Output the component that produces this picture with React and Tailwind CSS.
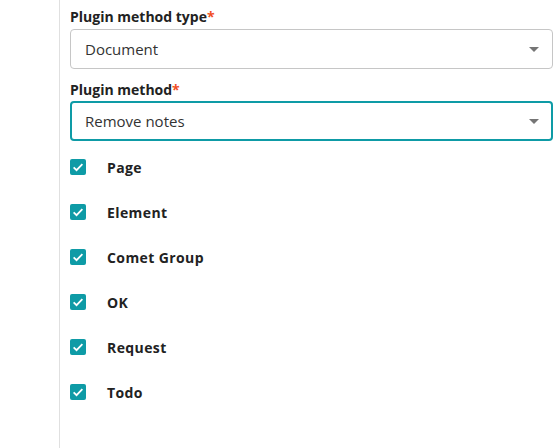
import React from "react";

const items = ["Page", "Element", "Comet Group", "OK", "Request", "Todo"];

function Arrow() {
  return (
    <svg width="10" height="5" viewBox="0 0 10 5" className="shrink-0">
      <path d="M0 0 L10 0 L5 5 Z" fill="#757575" />
    </svg>
  );
}

function Check() {
  return (
    <div className="w-4 h-4 rounded-[2px] bg-[#0e9ba6] flex items-center justify-center shrink-0">
      <svg width="14" height="14" viewBox="0 0 24 24">
        <path d="M4.5 12.5 L9.5 17.5 L19.5 7" fill="none" stroke="white" strokeWidth="3" />
      </svg>
    </div>
  );
}

export default function App() {
  return (
    <div className="w-[558px] h-[448px] bg-white flex" style={{ fontFamily: "'Open Sans', sans-serif" }}>
      <div className="w-[60px] border-r border-[#e0e0e0] shrink-0" />
      <div className="flex-1 pl-[10px] pr-[5px] pt-[8px]">
        <div className="text-[14px] font-bold text-[#222] leading-[18px]">
          Plugin method type<span className="text-[#f04e23]">*</span>
        </div>
        <div className="mt-[3px] h-[40px] border border-[#c6c6c6] rounded-[4px] flex items-center justify-between pl-[14px] pr-[13px] text-[15px] text-[#333]">
          <span>Document</span>
          <Arrow />
        </div>
        <div className="mt-[12px] text-[14px] font-bold text-[#222] leading-[18px]">
          Plugin method<span className="text-[#f04e23]">*</span>
        </div>
        <div className="mt-[2px] h-[40px] border-2 border-[#0e9ba6] rounded-[4px] flex items-center justify-between pl-[13px] pr-[12px] text-[15px] text-[#333]">
          <span>Remove notes</span>
          <Arrow />
        </div>
        <div className="mt-[18px] flex flex-col gap-[29px]">
          {items.map((t) => (
            <div key={t} className="flex items-center h-4">
              <Check />
              <span className="ml-[21px] text-[14px] font-bold tracking-[0.4px] text-[#222]">{t}</span>
            </div>
          ))}
        </div>
      </div>
    </div>
  );
}
